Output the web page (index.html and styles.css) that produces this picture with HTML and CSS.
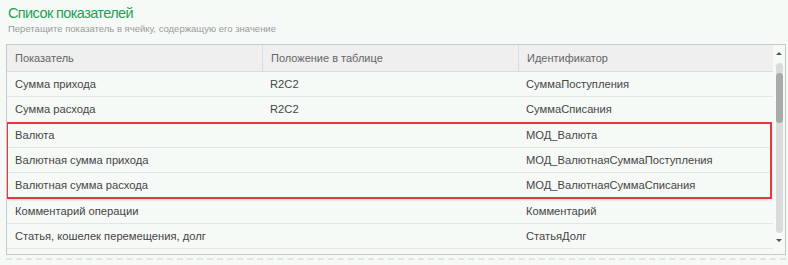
FILE: index.html
```html
<!DOCTYPE html>
<html lang="ru">

<head>
    <meta charset="UTF-8" />
    <title>Список показателей</title>
    <link rel="stylesheet" href="styles.css">
</head>

<body>
    <section class="panel">
        <h2 class="title">Список показателей</h2>
        <p class="hint">Перетащите показатель в ячейку, содержащую его значение</p>

        <div class="table">
            <div class="grid">
                <div class="row head">
                    <div class="cell">Показатель</div>
                    <div class="cell">Положение в таблице</div>
                    <div class="cell">Идентификатор</div>
                </div>
                <div class="row">
                    <div class="cell">Сумма прихода</div>
                    <div class="cell">R2C2</div>
                    <div class="cell">СуммаПоступления</div>
                </div>
                <div class="row">
                    <div class="cell">Сумма расхода</div>
                    <div class="cell">R2C2</div>
                    <div class="cell">СуммаСписания</div>
                </div>
                <div class="marked">
                    <div class="row">
                        <div class="cell">Валюта</div>
                        <div class="cell"></div>
                        <div class="cell">МОД_Валюта</div>
                    </div>
                    <div class="row">
                        <div class="cell">Валютная сумма прихода</div>
                        <div class="cell"></div>
                        <div class="cell">МОД_ВалютнаяСуммаПоступления</div>
                    </div>
                    <div class="row">
                        <div class="cell">Валютная сумма расхода</div>
                        <div class="cell"></div>
                        <div class="cell">МОД_ВалютнаяСуммаСписания</div>
                    </div>
                </div>
                <div class="row">
                    <div class="cell">Комментарий операции</div>
                    <div class="cell"></div>
                    <div class="cell">Комментарий</div>
                </div>
                <div class="row">
                    <div class="cell">Статья, кошелек перемещения, долг</div>
                    <div class="cell"></div>
                    <div class="cell">СтатьяДолг</div>
                </div>
                <!-- next row is scrolled out of view -->
                <div class="row">
                    <div class="cell"></div>
                    <div class="cell"></div>
                    <div class="cell"></div>
                </div>
            </div>

            <div class="scroll">
                <span class="arrow up"></span>
                <div class="track"><div class="thumb"></div></div>
                <span class="arrow down"></span>
            </div>
        </div>

        <div class="dashed"></div>
    </section>
</body>

</html>
```

FILE: styles.css
```css
* {
    box-sizing: border-box;
}

body {
    margin: 0;
    background: #f6faf7;
    font-family: "Liberation Sans", Arial, sans-serif;
    color: #454545;
}

.panel {
    padding: 4px 2px 0 6px;
}

.title {
    margin: 0 0 0 2px;
    font-size: 14.5px;
    line-height: 19px;
    font-weight: normal;
    letter-spacing: -0.6px;
    color: #1f9f58;
}

.hint {
    margin: 0 0 0 2px;
    font-size: 9.5px;
    line-height: 12px;
    color: #9a9a9a;
}

.table {
    margin-top: 9px;
    display: flex;
    height: 211px;
    border: 1px solid #c9c9c9;
    overflow: hidden;
}

.grid {
    flex: 1;
}

.row {
    display: grid;
    grid-template-columns: 255px 256px 1fr;
    height: 25.3px;
    border-bottom: 1px solid #e3e6e4;
    font-size: 11.2px;
}

.cell {
    padding: 0 8px;
    display: flex;
    align-items: center;
    white-space: nowrap;
}

.row.head {
    height: 27px;
    font-size: 11px;
    background: #efefef;
    border-bottom: 1px solid #dcdcdc;
    color: #666;
}

.row.head .cell + .cell {
    border-left: 1px solid #dcdcdc;
}

.marked {
    outline: 2px solid #e8363d;
    outline-offset: -1px;
    box-shadow: 0 1px 3px rgba(0, 0, 0, 0.25);
    position: relative;
    margin-right: 2px;
}

.scroll {
    width: 12px;
    display: flex;
    flex-direction: column;
    align-items: center;
    padding: 7px 0 8px;
}

.arrow {
    width: 0;
    height: 0;
    border-left: 3px solid transparent;
    border-right: 3px solid transparent;
}

.arrow.up {
    border-bottom: 3px solid #555;
}

.arrow.down {
    border-top: 3px solid #555;
}

.track {
    width: 7px;
    height: 170px;
    margin: 8px 0 6px;
    background: #dadcdb;
    border-radius: 4px;
    padding-top: 10px;
}

.thumb {
    height: 50px;
    background: #a9abaa;
    border-radius: 4px;
}

.dashed {
    margin-top: 3px;
    border-top: 2px dashed #e2e4e3;
}
```
